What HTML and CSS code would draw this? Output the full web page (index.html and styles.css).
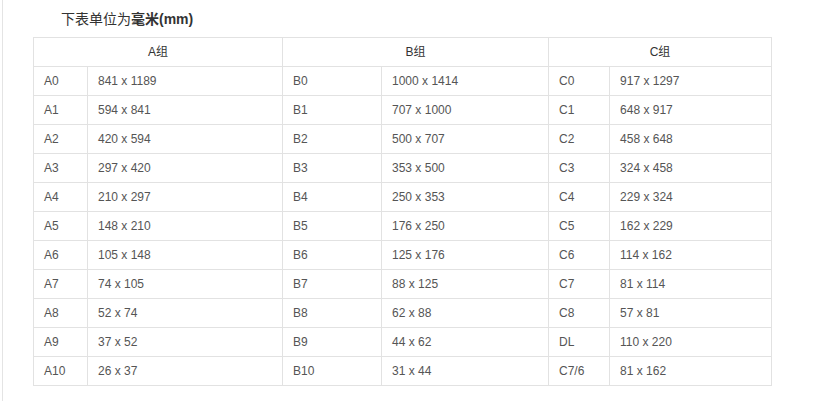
FILE: index.html
```html
<!DOCTYPE html>
<html lang="zh-CN">
<head>
<meta charset="utf-8">
<title>纸张尺寸</title>
<link rel="stylesheet" href="styles.css">
</head>
<body>
<div class="page">
  <p class="title">下表单位为<strong>毫米(mm)</strong></p>
  <table class="sizes">
    <colgroup>
      <col class="c-name-a"><col class="c-val-a">
      <col class="c-name-b"><col class="c-val-b">
      <col class="c-name-c"><col class="c-val-c">
    </colgroup>
    <thead>
      <tr><th colspan="2">A组</th><th colspan="2">B组</th><th colspan="2">C组</th></tr>
    </thead>
    <tbody>
      <tr><td>A0</td><td>841 x 1189</td><td>B0</td><td>1000 x 1414</td><td>C0</td><td>917 x 1297</td></tr>
      <tr><td>A1</td><td>594 x 841</td><td>B1</td><td>707 x 1000</td><td>C1</td><td>648 x 917</td></tr>
      <tr><td>A2</td><td>420 x 594</td><td>B2</td><td>500 x 707</td><td>C2</td><td>458 x 648</td></tr>
      <tr><td>A3</td><td>297 x 420</td><td>B3</td><td>353 x 500</td><td>C3</td><td>324 x 458</td></tr>
      <tr><td>A4</td><td>210 x 297</td><td>B4</td><td>250 x 353</td><td>C4</td><td>229 x 324</td></tr>
      <tr><td>A5</td><td>148 x 210</td><td>B5</td><td>176 x 250</td><td>C5</td><td>162 x 229</td></tr>
      <tr><td>A6</td><td>105 x 148</td><td>B6</td><td>125 x 176</td><td>C6</td><td>114 x 162</td></tr>
      <tr><td>A7</td><td>74 x 105</td><td>B7</td><td>88 x 125</td><td>C7</td><td>81 x 114</td></tr>
      <tr><td>A8</td><td>52 x 74</td><td>B8</td><td>62 x 88</td><td>C8</td><td>57 x 81</td></tr>
      <tr><td>A9</td><td>37 x 52</td><td>B9</td><td>44 x 62</td><td>DL</td><td>110 x 220</td></tr>
      <tr><td>A10</td><td>26 x 37</td><td>B10</td><td>31 x 44</td><td>C7/6</td><td>81 x 162</td></tr>
    </tbody>
  </table>
</div>
</body>
</html>
```
FILE: styles.css
```css
html, body {
  margin: 0;
  padding: 0;
  background: #fff;
}
body {
  font-family: "Liberation Sans", Arial, "Noto Sans CJK SC", sans-serif;
  color: #333;
}
.page {
  margin-left: 2px;
  border-left: 1px solid #e4e4e4;
  min-height: 401px;
  box-sizing: border-box;
  padding: 9px 0 0 30px;
}
.title {
  margin: 0 0 8px 28px;
  font-size: 14px;
  line-height: 20px;
  color: #333;
}
.title strong {
  font-weight: bold;
}
.sizes {
  border-collapse: collapse;
  table-layout: fixed;
  width: 739px;
  font-size: 12px;
}
.c-name-a { width: 54px; }
.c-val-a { width: 195px; }
.c-name-b { width: 99px; }
.c-val-b { width: 167px; }
.c-name-c { width: 61px; }
.c-val-c { width: 162px; }
.sizes th,
.sizes td {
  border: 1px solid #e2e2e2;
  height: 29px;
  padding: 0 10px;
  box-sizing: border-box;
  vertical-align: middle;
  line-height: 16px;
}
.sizes th {
  font-weight: normal;
  text-align: center;
  color: #333;
}
.sizes td {
  text-align: left;
  color: #555;
}
```
